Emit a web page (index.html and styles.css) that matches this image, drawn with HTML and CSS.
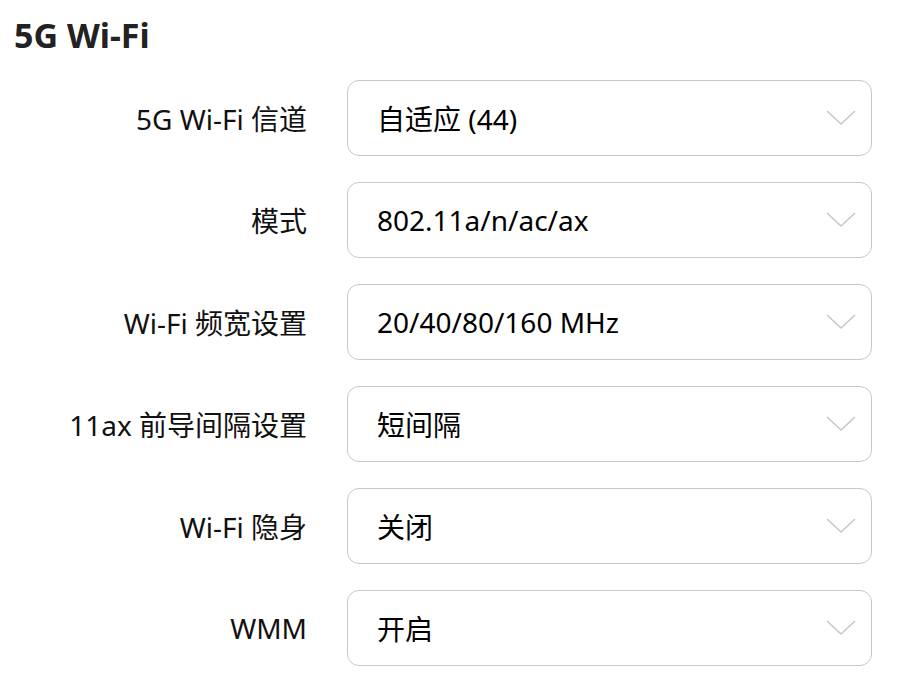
FILE: index.html
```html
<!DOCTYPE html>
<html lang="zh-CN">
<head>
<meta charset="utf-8">
<link rel="stylesheet" href="styles.css">
</head>
<body>
<div class="page">
  <h2 class="title">5G Wi-Fi</h2>
  <div class="form">
    <div class="row"><div class="label">5G Wi-Fi 信道</div><div class="select"><span class="value">自适应 (44)</span><svg class="chev" viewBox="0 0 30 16"><path d="M1 1 L15 14 L29 1"/></svg></div></div>
    <div class="row"><div class="label">模式</div><div class="select"><span class="value">802.11a/n/ac/ax</span><svg class="chev" viewBox="0 0 30 16"><path d="M1 1 L15 14 L29 1"/></svg></div></div>
    <div class="row"><div class="label">Wi-Fi 频宽设置</div><div class="select"><span class="value">20/40/80/160 MHz</span><svg class="chev" viewBox="0 0 30 16"><path d="M1 1 L15 14 L29 1"/></svg></div></div>
    <div class="row"><div class="label">11ax 前导间隔设置</div><div class="select"><span class="value">短间隔</span><svg class="chev" viewBox="0 0 30 16"><path d="M1 1 L15 14 L29 1"/></svg></div></div>
    <div class="row"><div class="label">Wi-Fi 隐身</div><div class="select"><span class="value">关闭</span><svg class="chev" viewBox="0 0 30 16"><path d="M1 1 L15 14 L29 1"/></svg></div></div>
    <div class="row"><div class="label">WMM</div><div class="select"><span class="value">开启</span><svg class="chev" viewBox="0 0 30 16"><path d="M1 1 L15 14 L29 1"/></svg></div></div>
  </div>
</div>
</body>
</html>
```
FILE: styles.css
```css
html, body {
  margin: 0;
  padding: 0;
  background: #fff;
}
body {
  font-family: "Noto Sans", "Noto Sans CJK SC", sans-serif;
  color: #000;
}
.page {
  padding: 14px 0 0 14px;
}
.title {
  margin: 0;
  font-size: 34px;
  font-weight: 700;
  line-height: 42px;
  color: #222;
}
.form {
  margin-top: 24px;
  display: flex;
  flex-direction: column;
  gap: 26px;
}
.row {
  display: flex;
  align-items: center;
}
.label {
  width: 293px;
  text-align: right;
  font-size: 28px;
  color: #111;
}
.select {
  margin-left: 40px;
  height: 74px;
  border: 1px solid #c8c8c8;
  border-radius: 12px;
  display: flex;
  align-items: center;
  justify-content: space-between;
  padding: 0 15px 0 29px;
  box-sizing: content-box;
  width: 479px;
}
.value {
  font-size: 28px;
  color: #000;
}
.chev {
  width: 30px;
  height: 16px;
  fill: none;
  stroke: #c8c8c8;
  stroke-width: 1.6;
}
```
